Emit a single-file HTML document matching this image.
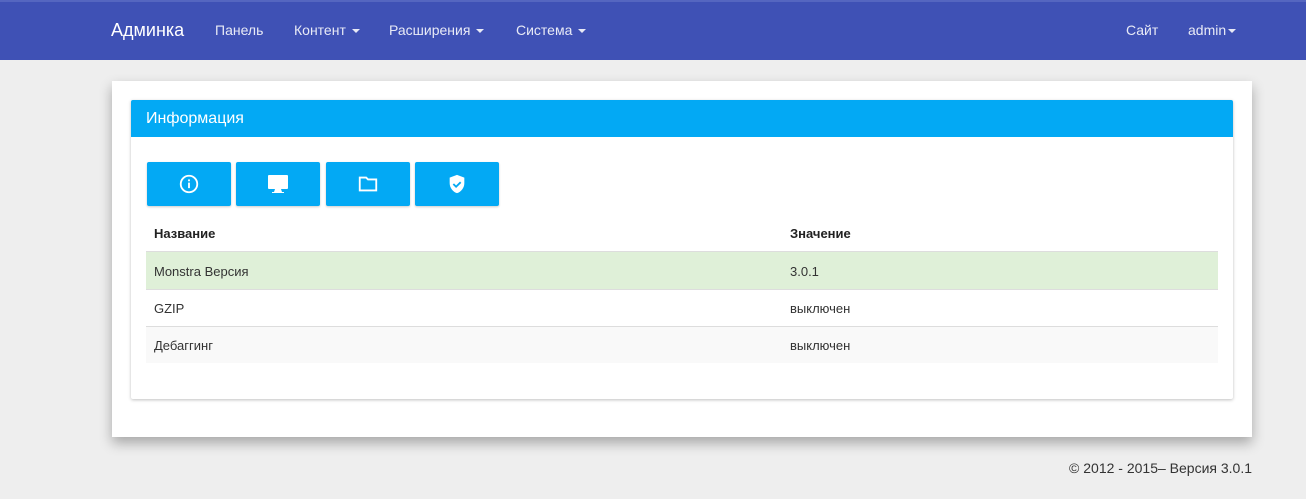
<!DOCTYPE html>
<html><head><meta charset="utf-8"><style>
body{margin:0;background:#eeeeee;font-family:"Liberation Sans",sans-serif;width:1306px;height:499px;overflow:hidden;position:relative}
.nav{position:absolute;left:0;top:0;width:1306px;height:60px;background:#3f51b5;color:#fff;border-top:2px solid #5566c0;box-sizing:border-box}
.nav span{position:absolute;top:20px;font-size:14px;color:#e8eaf6}
.car{display:inline-block;border-left:4px solid transparent;border-right:4px solid transparent;border-top:4px solid #e8eaf6;vertical-align:middle;margin-left:6px}
.card{position:absolute;left:112px;top:81px;width:1140px;height:356px;background:#fff;box-shadow:0 6px 12px rgba(0,0,0,.3)}
.panel{position:absolute;left:19px;top:19px;width:1102px;height:299px;background:#fff;box-shadow:0 1px 3px rgba(0,0,0,.25);border-radius:2px}
.ph{height:37px;background:#03a9f4;color:#fff;font-size:16px;line-height:37px;padding-left:15px;border-radius:2px 2px 0 0}
.btn{position:absolute;top:62px;width:84px;height:44px;background:#03a9f4;border-radius:2px;box-shadow:0 1px 2px rgba(0,0,0,.2);display:flex;align-items:center;justify-content:center}
.row{position:absolute;left:15px;width:1072px;font-size:13px;color:#333;box-sizing:border-box}
.row div{position:absolute;left:8px}
.row div+div{left:644px}
</style></head><body>
<div class="nav">
<span style="left:111px;top:18px;font-size:18px;color:#fff">Админка</span>
<span style="left:215px">Панель</span>
<span style="left:294px">Контент<i class="car"></i></span>
<span style="left:389px">Расширения<i class="car"></i></span>
<span style="left:516px">Система<i class="car"></i></span>
<span style="left:1126px">Сайт</span>
<span style="left:1188px">admin<i class="car" style="margin-left:2px"></i></span>
</div>
<div class="card"><div class="panel">
<div class="ph">Информация</div>
<div class="btn" style="left:16px"><svg width="22" height="22" viewBox="0 0 24 24"><circle cx="12" cy="12" r="9" fill="none" stroke="#fff" stroke-width="2"/><rect x="11" y="10.5" width="2" height="6" fill="#fff"/><rect x="11" y="7" width="2" height="2" fill="#fff"/></svg></div>
<div class="btn" style="left:105px"><svg width="24" height="24" viewBox="0 0 24 24"><rect x="2" y="3" width="20" height="14" rx="1" fill="#fff"/><path d="M9 17h6l1 3h2v1H6v-1h2z" fill="#fff"/></svg></div>
<div class="btn" style="left:195px"><svg width="22" height="22" viewBox="0 0 24 24"><path d="M3 5h7l2 2h9v12H3z" fill="none" stroke="#fff" stroke-width="2"/></svg></div>
<div class="btn" style="left:284px"><svg width="22" height="22" viewBox="0 0 24 24"><path d="M12 2l8 3v6c0 5-3.5 9.5-8 11-4.5-1.5-8-6-8-11V5z" fill="#fff"/><path d="M8 12l3 3 5-5" fill="none" stroke="#03a9f4" stroke-width="2"/></svg></div>
<div class="row" style="top:115px;height:37px;border-bottom:1px solid #ddd;font-weight:bold;color:#222"><div style="top:11px">Название</div><div style="top:11px">Значение</div></div>
<div class="row" style="top:152px;height:38px;background:#dff0d8;border-bottom:1px solid #ddd"><div style="top:12px">Monstra Версия</div><div style="top:12px">3.0.1</div></div>
<div class="row" style="top:190px;height:37px;border-bottom:1px solid #ddd"><div style="top:11px">GZIP</div><div style="top:11px">выключен</div></div>
<div class="row" style="top:227px;height:36px;background:#f9f9f9"><div style="top:11px">Дебаггинг</div><div style="top:11px">выключен</div></div>
</div></div>
<div style="position:absolute;right:54px;top:460px;font-size:14px;color:#333">© 2012 - 2015– Версия 3.0.1</div>
</body></html>
